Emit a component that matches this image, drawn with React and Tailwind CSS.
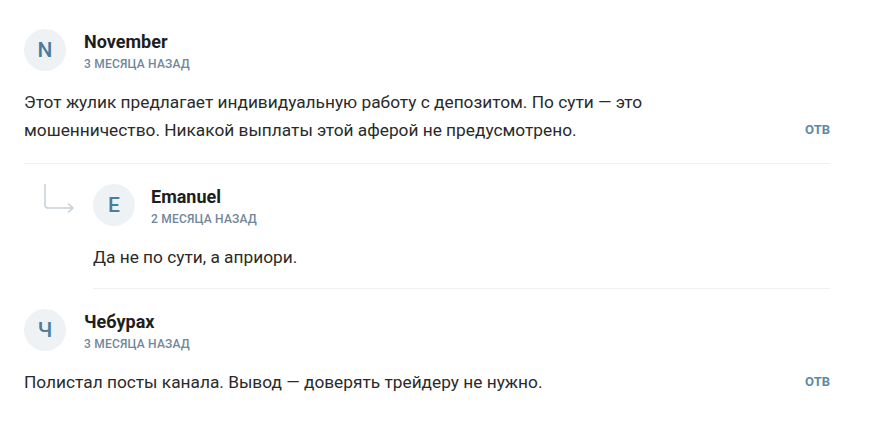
import React from 'react';

const comments = [
  {
    id: 1,
    letter: 'N',
    name: 'November',
    date: '3 месяца назад',
    text: 'Этот жулик предлагает индивидуальную работу с депозитом. По сути — это мошенничество. Никакой выплаты этой аферой не предусмотрено.',
    replies: [
      {
        id: 2,
        letter: 'E',
        name: 'Emanuel',
        date: '2 месяца назад',
        text: 'Да не по сути, а априори.',
      },
    ],
  },
  {
    id: 3,
    letter: 'Ч',
    name: 'Чебурах',
    date: '3 месяца назад',
    text: 'Полистал посты канала. Вывод — доверять трейдеру не нужно.',
    replies: [],
  },
];

function Avatar({ letter }) {
  return (
    <div className="w-[42px] h-[42px] rounded-full bg-[#eef2f5] flex items-center justify-center flex-shrink-0">
      <span className="text-[21px] font-medium text-[#4a7d9b] leading-none">{letter}</span>
    </div>
  );
}

function Header({ letter, name, date, gap }) {
  return (
    <div className={`flex items-center h-[42px] ${gap}`}>
      <Avatar letter={letter} />
      <div className="flex flex-col">
        <span className="text-[18px] font-bold text-[#1e1e1e] leading-[26px]">{name}</span>
        <span className="text-[12px] font-medium uppercase tracking-[0.2px] text-[#71879a] leading-[14px] mt-[2px]">
          {date}
        </span>
      </div>
    </div>
  );
}

function ReplyArrow() {
  return (
    <svg width="32" height="30" viewBox="0 0 32 30" fill="none" className="flex-shrink-0">
      <path d="M1 0 V21 Q1 24 4 24 H29" stroke="#c7cfd5" strokeWidth="1.5" />
      <path d="M24 19.5 L29 24 L24 28.5" stroke="#c7cfd5" strokeWidth="1.5" />
    </svg>
  );
}

export default function App() {
  return (
    <div className="w-[873px] h-[445px] bg-white pl-[24px] pt-[29px]" style={{ fontFamily: 'Roboto, "Noto Sans", sans-serif' }}>
      <div className="w-[806px]">
        {comments.map((c, i) => (
          <div key={c.id}>
            {i > 0 && <div className="h-[20px]" />}
            <Header letter={c.letter} name={c.name} date={c.date} gap="gap-[18px]" />
            <div className="flex items-end justify-between mt-[17px]">
              <p className="w-[660px] text-[17.3px] leading-[28px] text-[#2a2a2a]">{c.text}</p>
              <button className="text-[13px] font-bold uppercase text-[#5b8aa6] leading-[28px]">отв</button>
            </div>
            {c.replies.length > 0 && (
              <>
                <div className="h-px bg-[#eef0f2] mt-[19px]" />
                {c.replies.map((r) => (
                  <div key={r.id} className="pl-[20px] pt-[20px]">
                    <div className="flex">
                      <div className="mr-[17px]">
                        <ReplyArrow />
                      </div>
                      <div className="flex-1">
                        <Header letter={r.letter} name={r.name} date={r.date} gap="gap-[16px]" />
                        <p className="mt-[17px] text-[17.3px] leading-[28px] text-[#2a2a2a]">{r.text}</p>
                        <div className="h-px bg-[#eef0f2] mt-[17px]" />
                      </div>
                    </div>
                  </div>
                ))}
              </>
            )}
          </div>
        ))}
      </div>
    </div>
  );
}
